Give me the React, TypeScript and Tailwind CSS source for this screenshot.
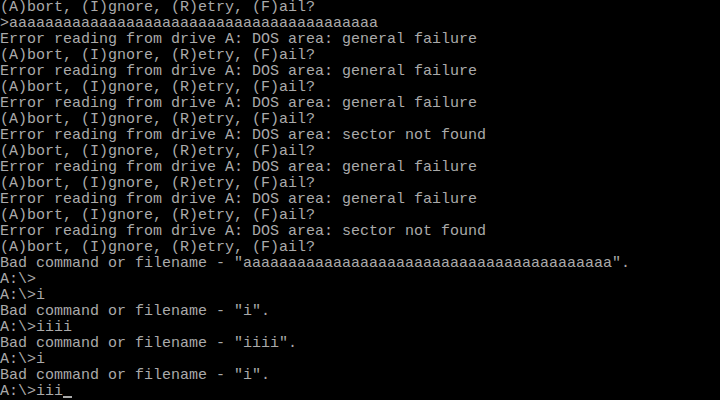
const A = "a".repeat(41);
const ABORT = "(A)bort, (I)gnore, (R)etry, (F)ail?";
const GF = "Error reading from drive A: DOS area: general failure";
const SNF = "Error reading from drive A: DOS area: sector not found";

const lines = [
  ABORT,
  ">" + A,
  GF,
  ABORT,
  GF,
  ABORT,
  GF,
  ABORT,
  SNF,
  ABORT,
  GF,
  ABORT,
  GF,
  ABORT,
  SNF,
  ABORT,
  `Bad command or filename - "${A}".`,
  "A:\\>",
  "A:\\>i",
  'Bad command or filename - "i".',
  "A:\\>iiii",
  'Bad command or filename - "iiii".',
  "A:\\>i",
  'Bad command or filename - "i".',
];

export default function App() {
  return (
    <div
      className="w-[720px] h-[400px] bg-black text-[#aaaaaa] overflow-hidden text-[15px] leading-[16px] whitespace-pre"
      style={{ fontFamily: '"Liberation Mono", "DejaVu Sans Mono", monospace' }}
    >
      {lines.map((l, i) => (
        <div key={i} className="h-[16px]">
          {l}
        </div>
      ))}
      <div className="h-[16px] flex">
        <span>A:\&gt;iii</span>
        <span className="w-[9px] h-[16px] flex flex-col justify-end pb-[2px]">
          <span className="block w-[9px] h-[2px] bg-[#aaaaaa]" />
        </span>
      </div>
    </div>
  );
}
